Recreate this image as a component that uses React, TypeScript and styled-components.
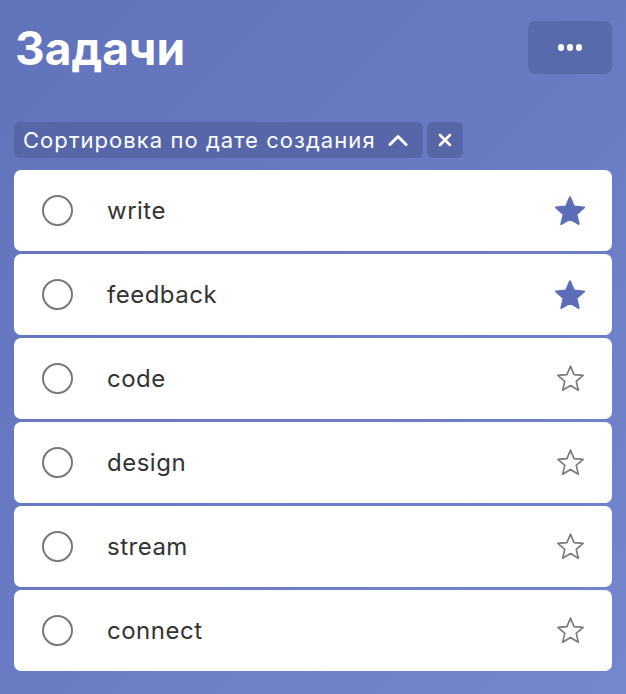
import React from "react";
import styled, { createGlobalStyle } from "styled-components";

const GlobalStyle = createGlobalStyle`
  html, body { margin: 0; padding: 0; }
  body {
    background: linear-gradient(135deg, #6272bb 0%, #6a7bc3 50%, #7386ce 100%);
    min-height: 100vh;
    font-family: "Inter", "Roboto", "Liberation Sans", sans-serif;
  }
  #root { min-height: 100vh; }
`;

const Page = styled.div`
  padding: 21px 14px 20px 14px;
`;

const Header = styled.header`
  display: flex;
  align-items: center;
  justify-content: space-between;
  height: 53px;
`;

const Title = styled.h1`
  margin: 0 0 0 1px;
  font-family: "Inter", "Roboto", sans-serif;
  font-weight: 700;
  font-size: 46px;
  letter-spacing: 0;
  color: #ffffff;
`;

const MenuButton = styled.button`
  width: 84px;
  height: 53px;
  border: none;
  border-radius: 8px;
  background: #5869ac;
  display: flex;
  align-items: center;
  justify-content: center;
  gap: 2.5px;
  padding: 0;
  cursor: pointer;
`;

const Dot = styled.span`
  width: 6.5px;
  height: 6.5px;
  border-radius: 50%;
  background: #ffffff;
`;

const FilterRow = styled.div`
  display: flex;
  gap: 4px;
  margin-top: 48px;
`;

const Chip = styled.button`
  height: 36px;
  border: none;
  border-radius: 6px;
  background: #5666a9;
  color: #ffffff;
  display: flex;
  align-items: center;
  padding: 0 15px 0 9px;
  font-family: "Inter", "Roboto", sans-serif;
  font-size: 22px;
  letter-spacing: 1.05px;
  font-weight: 400;
  cursor: pointer;
`;

const ChipLabel = styled.span`
  margin-right: 12px;
`;

const ClearButton = styled.button`
  width: 36px;
  height: 36px;
  border: none;
  border-radius: 6px;
  background: #5666a9;
  display: flex;
  align-items: center;
  justify-content: center;
  padding: 0;
  cursor: pointer;
`;

const List = styled.ul`
  list-style: none;
  margin: 12px 0 0 0;
  padding: 0;
  display: flex;
  flex-direction: column;
  gap: 3px;
`;

const Card = styled.li`
  height: 81px;
  background: #ffffff;
  border-radius: 7px;
  display: flex;
  align-items: center;
  padding: 0 26px 0 28px;
`;

const Check = styled.span`
  width: 31px;
  height: 31px;
  box-sizing: border-box;
  border: 2.5px solid #777777;
  border-radius: 50%;
  flex-shrink: 0;
`;

const TaskText = styled.span`
  margin-left: 34px;
  flex: 1;
  font-family: "Inter", "Roboto", sans-serif;
  font-size: 24px;
  letter-spacing: 0.5px;
  color: #333333;
`;

const StarWrap = styled.span`
  display: flex;
  width: 32px;
  height: 32px;
  align-items: center;
  justify-content: center;
`;

const STAR =
  "12,1.8 14.94,8.75 22.46,9.4 16.76,14.35 18.47,21.7 12,17.8 5.53,21.7 7.24,14.35 1.54,9.4 9.06,8.75";

const Star: React.FC<{ filled: boolean }> = ({ filled }) => (
  <StarWrap>
    {filled ? (
      <svg width="32" height="32" viewBox="0 0 24 24">
        <polygon
          points={STAR}
          fill="#5d6eb8"
          stroke="#5d6eb8"
          strokeWidth="1.6"
          strokeLinejoin="round"
        />
      </svg>
    ) : (
      <svg width="29" height="29" viewBox="0 0 24 24">
        <polygon
          points={STAR}
          fill="none"
          stroke="#7a7a7a"
          strokeWidth="1.35"
          strokeLinejoin="round"
        />
      </svg>
    )}
  </StarWrap>
);

const tasks = [
  { text: "write", starred: true },
  { text: "feedback", starred: true },
  { text: "code", starred: false },
  { text: "design", starred: false },
  { text: "stream", starred: false },
  { text: "connect", starred: false },
];

export default function App() {
  return (
    <>
      <GlobalStyle />
      <Page>
        <Header>
          <Title>Задачи</Title>
          <MenuButton aria-label="menu">
            <Dot />
            <Dot />
            <Dot />
          </MenuButton>
        </Header>
        <FilterRow>
          <Chip>
            <ChipLabel>Сортировка по дате создания</ChipLabel>
            <svg width="20" height="12" viewBox="0 0 20 12">
              <polyline
                points="2,10.5 10,2.5 18,10.5"
                fill="none"
                stroke="#ffffff"
                strokeWidth="3"
                strokeLinecap="round"
                strokeLinejoin="round"
              />
            </svg>
          </Chip>
          <ClearButton aria-label="clear">
            <svg width="14" height="14" viewBox="0 0 14 14">
              <path
                d="M2 2 L12 12 M12 2 L2 12"
                stroke="#ffffff"
                strokeWidth="2.6"
                strokeLinecap="round"
              />
            </svg>
          </ClearButton>
        </FilterRow>
        <List>
          {tasks.map((t) => (
            <Card key={t.text}>
              <Check />
              <TaskText>{t.text}</TaskText>
              <Star filled={t.starred} />
            </Card>
          ))}
        </List>
      </Page>
    </>
  );
}
